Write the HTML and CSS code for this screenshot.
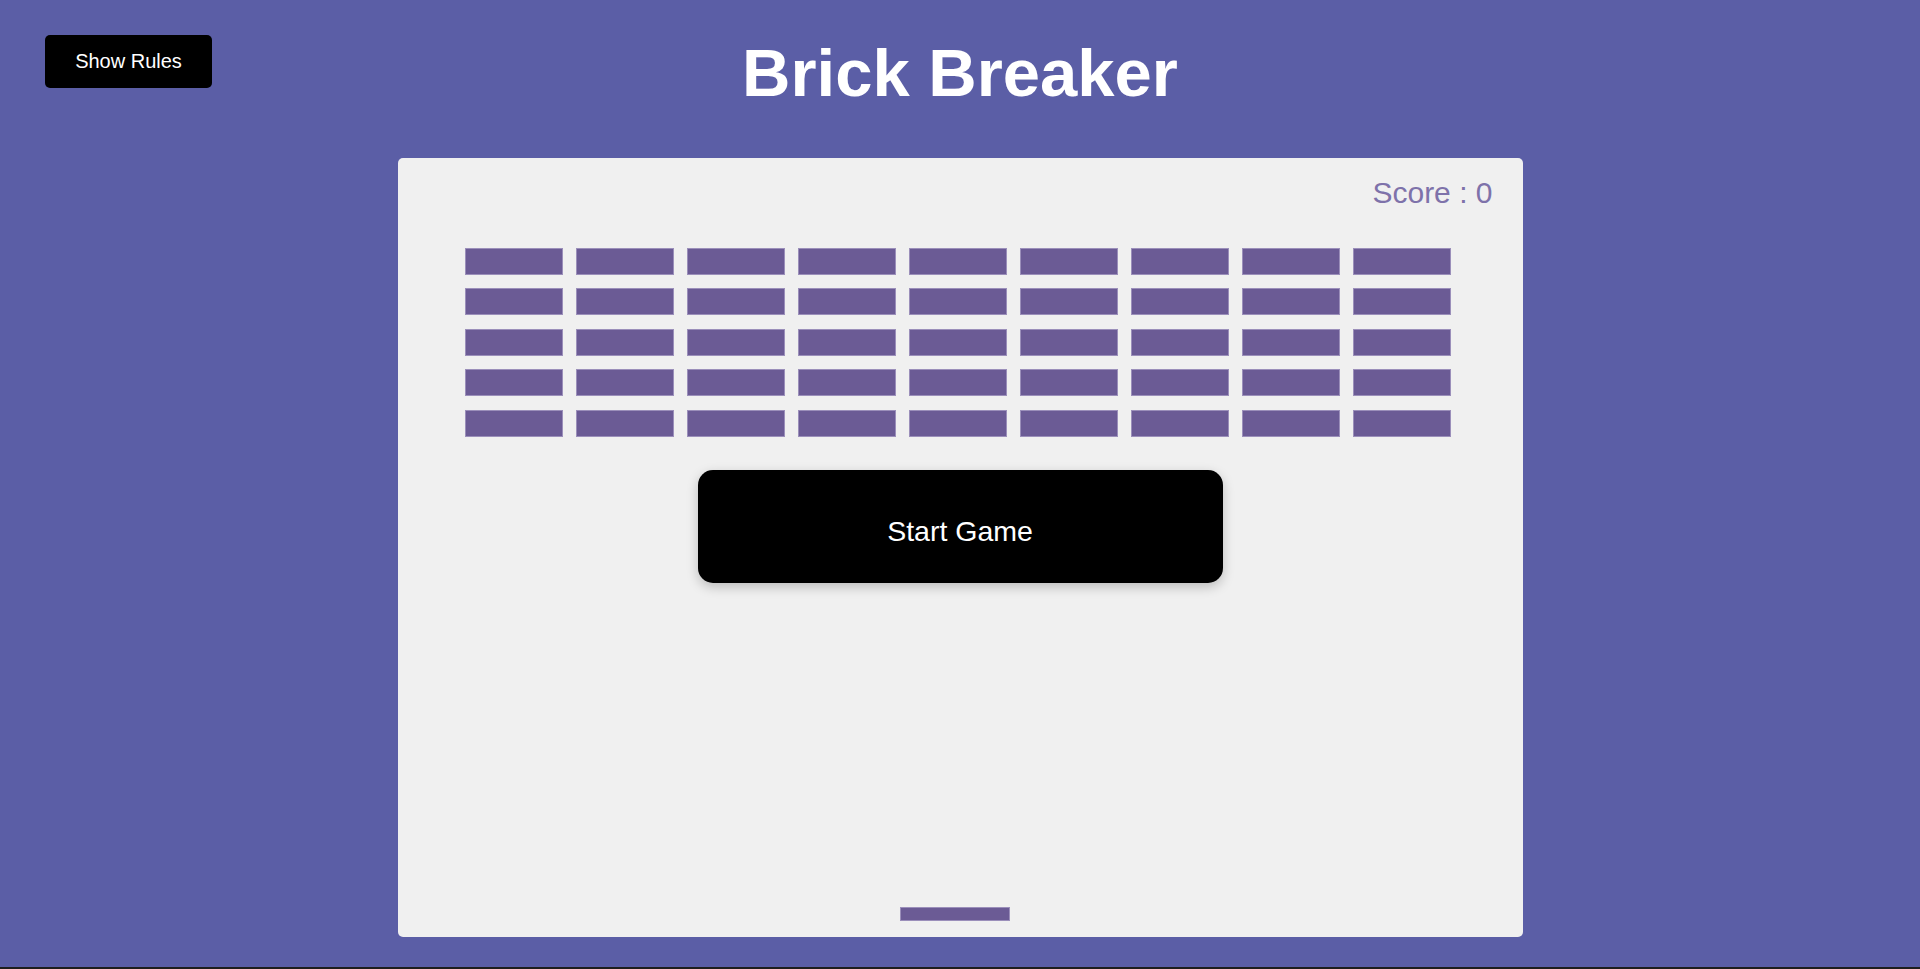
FILE: index.html
```html
<!DOCTYPE html>
<html lang="en">
<head>
<meta charset="utf-8">
<title>Brick Breaker</title>
<link rel="stylesheet" href="styles.css">
</head>
<body>
<header class="header">
  <button class="rules-btn">Show Rules</button>
  <h1 class="title">Brick Breaker</h1>
  <div class="spacer"></div>
</header>
<main class="board">
  <div class="score">Score : 0</div>
  <div class="bricks">
    <div class="brick"></div><div class="brick"></div><div class="brick"></div><div class="brick"></div><div class="brick"></div><div class="brick"></div><div class="brick"></div><div class="brick"></div><div class="brick"></div>
    <div class="brick"></div><div class="brick"></div><div class="brick"></div><div class="brick"></div><div class="brick"></div><div class="brick"></div><div class="brick"></div><div class="brick"></div><div class="brick"></div>
    <div class="brick"></div><div class="brick"></div><div class="brick"></div><div class="brick"></div><div class="brick"></div><div class="brick"></div><div class="brick"></div><div class="brick"></div><div class="brick"></div>
    <div class="brick"></div><div class="brick"></div><div class="brick"></div><div class="brick"></div><div class="brick"></div><div class="brick"></div><div class="brick"></div><div class="brick"></div><div class="brick"></div>
    <div class="brick"></div><div class="brick"></div><div class="brick"></div><div class="brick"></div><div class="brick"></div><div class="brick"></div><div class="brick"></div><div class="brick"></div><div class="brick"></div>
  </div>
  <button class="start-btn">Start Game</button>
  <div class="paddle"></div>
</main>
</body>
</html>
```

FILE: styles.css
```css
html {
  background: #1e1e1e;
}

body {
  margin: 0;
  height: 967px;
  background: #5b5ea6;
  font-family: "Liberation Sans", Arial, sans-serif;
  overflow: hidden;
}

.header {
  display: grid;
  grid-template-columns: 1fr auto 1fr;
  align-items: start;
}

.rules-btn {
  justify-self: start;
  margin: 35px 0 0 45px;
  width: 167px;
  height: 53px;
  background: #000;
  color: #fff;
  border: none;
  border-radius: 5px;
  font-family: "Liberation Sans", Arial, sans-serif;
  font-size: 20px;
  padding: 0;
  cursor: pointer;
}

.title {
  margin: 35px 0 0;
  font-size: 67px;
  line-height: 76px;
  font-weight: bold;
  color: #fff;
  text-align: center;
}

.board {
  box-sizing: border-box;
  width: 1125px;
  height: 779px;
  margin: 47px auto 0;
  background: #f0f0f0;
  border-radius: 5px;
  display: flex;
  flex-direction: column;
  padding: 18px 0 16px;
}

.score {
  align-self: flex-end;
  margin-right: 30px;
  font-size: 30px;
  line-height: 34px;
  color: #7e72aa;
}

.bricks {
  margin: 38px 0 0 67px;
  display: grid;
  grid-template-columns: repeat(9, 98px);
  grid-auto-rows: 27px;
  column-gap: 13px;
  row-gap: 13.4px;
}

.brick {
  box-sizing: border-box;
  background: #6b5b95;
  border: 1px solid #9b8fba;
}

.start-btn {
  align-self: center;
  margin-top: 33px;
  width: 525px;
  height: 113px;
  background: #000;
  color: #fff;
  border: none;
  border-radius: 15px;
  box-shadow: 0 4px 12px rgba(0, 0, 0, 0.22);
  font-family: "Liberation Sans", Arial, sans-serif;
  font-size: 28.5px;
  padding: 10px 0 0;
  cursor: pointer;
}

.paddle {
  box-sizing: border-box;
  align-self: flex-start;
  margin: auto 0 0 502px;
  width: 110px;
  height: 14px;
  background: #6b5b95;
  border: 1px solid #9b8fba;
}
```
